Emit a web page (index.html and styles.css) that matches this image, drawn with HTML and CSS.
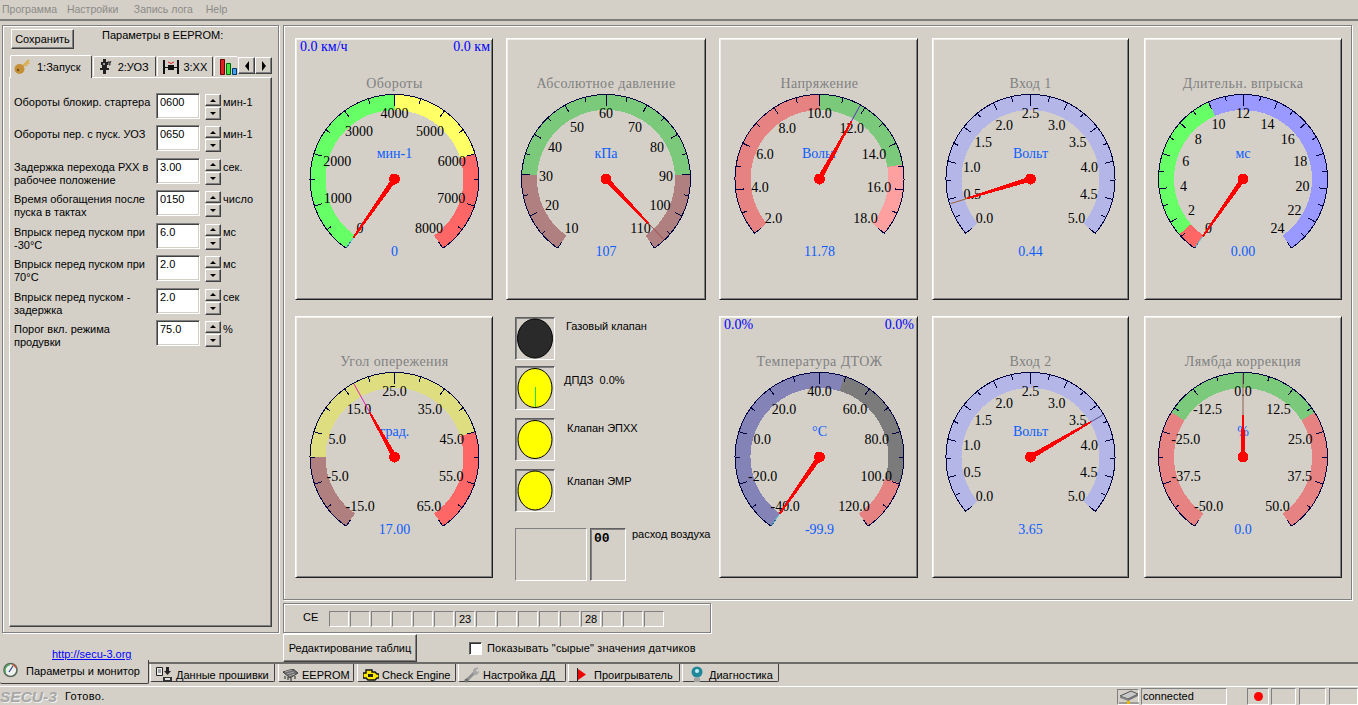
FILE: index.html
```html
<!DOCTYPE html>
<html lang="ru">
  <head>
    <meta charset="UTF-8" />
    <title>SECU-3 Manager</title>
    <link rel="stylesheet" href="styles.css">
  </head>
  <body>
    <div class="app">
      <div class="menu">
        <span class="menu-item m1">Программа</span>
        <span class="menu-item m2">Настройки</span>
        <span class="menu-item m3">Запись лога</span>
        <span class="menu-item">Help</span>
      </div>

      <div class="main">
        <div class="left-col">
          <div class="frame left-frame">
            <div class="save-row">
              <div class="btn save-btn">Сохранить</div>
              <span class="save-title">Параметры в EEPROM:</span>
            </div>
            <div class="sub-tabs">
              <div class="sub-tab sub-tab-active t1">
                <svg class="key-icon" width="16" height="17" viewBox="0 0 16 17"><path d="M9 8 15 2M11 6l2 2M13 4l2 2" stroke="#d8b058" stroke-width="2.4" fill="none"/><circle cx="5.5" cy="11" r="5" fill="#c48f36"/><circle cx="4" cy="12" r="1.3" fill="#7a5420"/></svg>
                <span>1:Запуск</span>
              </div>
              <div class="sub-tab t2">
                <svg width="15" height="16" viewBox="0 0 15 16"><path d="M4 0h3v3H4zM2 3h7v3H2zM3 6h5v5H3zM1 9h9v2H1zM4 11h3v4H4z" fill="#222"/><path d="M4 4h2v2H4z" fill="#999"/><path d="M10 3h1v3h-1zM12 2l-1 2M9 2l1 2" stroke="#333" fill="none"/></svg>
                <span>2:УОЗ</span>
              </div>
              <div class="sub-tab t3">
                <svg width="17" height="15" viewBox="0 0 17 15"><path d="M0 1h2v14H0zM14 1h2v14h-2zM2 8h12v1H2zM5 6h6v5H5z" fill="#111"/><path d="M5 3q3 3 6 0" stroke="#e02020" fill="none"/></svg>
                <span>3:XX</span>
              </div>
              <div class="sub-tab t4">
                <svg width="17" height="16" viewBox="0 0 17 16"><path d="M.5.5h4v15h-4z" fill="#e02020" stroke="#600"/><path d="M6.5 4.5h4v11h-4z" fill="#40e040" stroke="#060"/><path d="M12.5 9.5h4v6h-4z" fill="#40a0f0" stroke="#036"/></svg>
              </div>
              <div class="btn arrow-btn"><i class="tri tri-left"></i></div>
              <div class="btn arrow-btn"><i class="tri tri-right"></i></div>
            </div>
            <div class="sub-panel">
              <div class="param">
                <div class="param-label">Обороты блокир. стартера</div>
                <div class="edit">0600</div>
                <div class="spin"><div class="btn"><i class="tri tri-up"></i></div><div class="btn"><i class="tri tri-down"></i></div></div>
                <div class="param-unit">мин-1</div>
              </div>
              <div class="param">
                <div class="param-label">Обороты пер. с пуск. УОЗ</div>
                <div class="edit">0650</div>
                <div class="spin"><div class="btn"><i class="tri tri-up"></i></div><div class="btn"><i class="tri tri-down"></i></div></div>
                <div class="param-unit">мин-1</div>
              </div>
              <div class="param">
                <div class="param-label">Задержка перехода РХХ в рабочее положение</div>
                <div class="edit">3.00</div>
                <div class="spin"><div class="btn"><i class="tri tri-up"></i></div><div class="btn"><i class="tri tri-down"></i></div></div>
                <div class="param-unit">сек.</div>
              </div>
              <div class="param">
                <div class="param-label">Время обогащения после пуска в тактах</div>
                <div class="edit">0150</div>
                <div class="spin"><div class="btn"><i class="tri tri-up"></i></div><div class="btn"><i class="tri tri-down"></i></div></div>
                <div class="param-unit">число</div>
              </div>
              <div class="param">
                <div class="param-label">Впрыск перед пуском при -30°C</div>
                <div class="edit">6.0</div>
                <div class="spin"><div class="btn"><i class="tri tri-up"></i></div><div class="btn"><i class="tri tri-down"></i></div></div>
                <div class="param-unit">мс</div>
              </div>
              <div class="param">
                <div class="param-label">Впрыск перед пуском при 70°C</div>
                <div class="edit">2.0</div>
                <div class="spin"><div class="btn"><i class="tri tri-up"></i></div><div class="btn"><i class="tri tri-down"></i></div></div>
                <div class="param-unit">мс</div>
              </div>
              <div class="param">
                <div class="param-label">Впрыск перед пуском - задержка</div>
                <div class="edit">2.0</div>
                <div class="spin"><div class="btn"><i class="tri tri-up"></i></div><div class="btn"><i class="tri tri-down"></i></div></div>
                <div class="param-unit">сек</div>
              </div>
              <div class="param">
                <div class="param-label">Порог вкл. режима продувки</div>
                <div class="edit">75.0</div>
                <div class="spin"><div class="btn"><i class="tri tri-up"></i></div><div class="btn"><i class="tri tri-down"></i></div></div>
                <div class="param-unit">%</div>
              </div>
            </div>
          </div>
          <a class="site-link" href="#">http://secu-3.org</a>
        </div>

        <div class="right-col">
          <div class="frame gauges-frame">
            <div class="gauge-grid">
              <div class="gauge" id="g-rpm"></div>
              <div class="gauge gauge-wide" id="g-map"></div>
              <div class="gauge gauge-mid" id="g-volt"></div>
              <div class="gauge gauge-narrow" id="g-in1"></div>
              <div class="gauge" id="g-inj"></div>
              <div class="gauge" id="g-adv"></div>
              <div class="leds">
                <div class="led-row lr1">
                  <div class="led"><svg width="38" height="41" viewBox="0 0 38 41"><ellipse cx="19" cy="20.5" rx="17.5" ry="19.5" fill="#2a2a2a" stroke="#000"/></svg></div>
                  <span class="led-label ll1">Газовый клапан</span>
                </div>
                <div class="led-row lr2">
                  <div class="led led-tall"><svg width="38" height="42" viewBox="0 0 38 42"><ellipse cx="19" cy="21" rx="17" ry="19.5" fill="#ffff00" stroke="#000"/><path d="M19.5 20v20" stroke="#20e040"/></svg></div>
                  <span class="led-label ll2">ДПДЗ&nbsp; 0.0%</span>
                </div>
                <div class="led-row lr3">
                  <div class="led"><svg width="38" height="41" viewBox="0 0 38 41"><ellipse cx="19" cy="20.5" rx="17" ry="19" fill="#ffff00" stroke="#000"/></svg></div>
                  <span class="led-label ll3">Клапан ЭПХХ</span>
                </div>
                <div class="led-row lr4">
                  <div class="led"><svg width="38" height="41" viewBox="0 0 38 41"><ellipse cx="19" cy="20.5" rx="17" ry="19.5" fill="#ffff00" stroke="#000"/></svg></div>
                  <span class="led-label ll4">Клапан ЭМР</span>
                </div>
                <div class="air-row">
                  <div class="air-blank"></div>
                  <div class="air-value">00</div>
                  <span class="air-label">расход воздуха</span>
                </div>
              </div>
              <div class="gauge gauge-mid" id="g-temp"></div>
              <div class="gauge gauge-narrow" id="g-in2"></div>
              <div class="gauge" id="g-lambda"></div>
            </div>
          </div>

          <div class="frame ce-frame">
            <span class="ce-title">CE</span>
            <div class="ce-cells">
              <div class="ce-cell"></div><div class="ce-cell"></div><div class="ce-cell"></div><div class="ce-cell"></div>
              <div class="ce-cell"></div><div class="ce-cell"></div><div class="ce-cell">23</div><div class="ce-cell"></div>
              <div class="ce-cell"></div><div class="ce-cell"></div><div class="ce-cell"></div><div class="ce-cell"></div>
              <div class="ce-cell">28</div><div class="ce-cell"></div><div class="ce-cell"></div><div class="ce-cell"></div>
            </div>
          </div>

          <div class="tools">
            <div class="btn tables-btn">Редактирование таблиц</div>
            <div class="check"></div>
            <span class="check-label">Показывать "сырые" значения датчиков</span>
          </div>
        </div>
      </div>

      <div class="page-tabs">
        <div class="page-tab page-tab-active">
          <svg class="gauge-icon" width="16" height="16" viewBox="0 0 16 16"><circle cx="8.500" cy="8" r="6.500" fill="#eef2ee" stroke="#586858" stroke-width="1.600"/><path d="M3.500 11A6 6 0 0 1 8 2.500" stroke="#58a868" stroke-width="1.500" fill="none"/><path d="M10 2.500A6 6 0 0 1 14 6" stroke="#d06040" stroke-width="1.500" fill="none"/><path d="M7 10l4-6" stroke="#304080" stroke-width="1.200"/></svg>
          <span>Параметры и монитор</span>
        </div>
        <div class="page-tab">
          <svg width="17" height="16" viewBox="0 0 17 16"><path d="M.5.5h6v8h-6z" fill="#eee" stroke="#222"/><path d="M2 3h3M2 5h3" stroke="#555"/><path d="M10 0h3v4h2l-3.500 4L8 4h2z" fill="#222"/><path d="M7 10h9v5H7z" fill="#333"/><path d="M9 11h5v2H9z" fill="#ddd"/></svg>
          <span>Данные прошивки</span>
        </div>
        <div class="page-tab">
          <svg width="16" height="12" viewBox="0 0 16 12"><path d="M0 3 10 0l5 4-8 5z" fill="#6c6c6c" stroke="#3c3c3c"/><path d="M2 3l7-2M4 5l7-2M6 7l6-2" stroke="#a8a8a8"/><path d="M2 7v3M5 8v3M8 9v3M12 7v3" stroke="#484848" stroke-width="1.300"/></svg>
          <span>EEPROM</span>
        </div>
        <div class="page-tab">
          <svg width="16" height="12" viewBox="0 0 16 12"><path d="M3 1h6v2h3l2 2h2v4h-2l-2 2H5L3 9H0V4h3z" fill="#ffe800" stroke="#111" stroke-width="1.400"/><path d="M5 5h5v3H5z" fill="#222"/></svg>
          <span>Check Engine</span>
        </div>
        <div class="page-tab">
          <svg width="16" height="16" viewBox="0 0 16 16"><path d="M2 14 11 5" stroke="#909090" stroke-width="3"/><path d="M9 5a4 4 0 0 1 6-4l-3 2 1 2 2-1a4 4 0 0 1-5 4z" fill="#a8a8a8"/><circle cx="2.500" cy="13.500" r="2" fill="#707070"/></svg>
          <span>Настройка ДД</span>
        </div>
        <div class="page-tab">
          <svg width="10" height="13" viewBox="0 0 10 13"><path d="M.5 0v13" stroke="#222"/><path d="M1 1l8 5.500L1 12z" fill="#f00000"/></svg>
          <span>Проигрыватель</span>
        </div>
        <div class="page-tab">
          <svg width="12" height="17" viewBox="0 0 12 17"><circle cx="6" cy="6" r="5.500" fill="#208898"/><circle cx="6" cy="5" r="2" fill="#c0f0f8"/><path d="M3 12h6v4H3z" fill="#808080"/><path d="M3 13h6M3 15h6" stroke="#c8c8c8"/></svg>
          <span>Диагностика</span>
        </div>
      </div>

      <div class="status">
        <span class="secu-logo">SECU-3</span>
        <span class="status-text">Готово.</span>
        <div class="net-icon"><svg width="20" height="15" viewBox="0 0 20 15"><path d="M1 6 12 1l7 3-10 5z" fill="#c8c8c8" stroke="#555"/><path d="M1 6l8 3v2L1 8z" fill="#888"/><path d="M9 9l10-5v2L9 11z" fill="#777"/><path d="M0 13h20" stroke="#666"/><path d="M8 11h3v3H8z" fill="#e8b800"/></svg></div>
        <div class="status-cell status-conn">connected</div>
        <div class="status-cell status-led"><i class="red-dot"></i></div>
        <div class="status-cell status-s1"></div>
        <div class="status-cell status-s2"></div>
        <div class="status-cell status-s3"></div>
      </div>
    </div>

    <script src="script.js"></script>
  </body>
</html>
```

FILE: styles.css
```css
* {
  box-sizing: border-box;
}
body {
  margin: 0;
  background-color: #d4d0c8;
  font-family: "Liberation Sans", Arial, sans-serif;
  font-size: 11px;
  color: #000;
}
.app {
  width: 1358px;
  height: 705px;
  overflow: hidden;
  display: flex;
  flex-direction: column;
}

/* menu */
.menu {
  height: 21px;
  flex: none;
  padding: 3px 0 0 2px;
  border-bottom: 2px solid #807e7a;
  color: #8c8a86;
  font-size: 10.5px;
  white-space: nowrap;
}
.menu-item {
  display: inline-block;
}
.m1 { width: 62px; }
.m2 { width: 64px; }
.m3 { width: 69px; }

/* common */
.frame {
  border: 1px solid #808080;
  box-shadow: 1px 1px 0 #fff, inset 1px 1px 0 #fff;
}
.btn {
  background-color: #d4d0c8;
  border: 1px solid;
  border-color: #fff #404040 #404040 #fff;
  box-shadow: inset -1px -1px 0 #808080;
  display: flex;
  align-items: center;
  justify-content: center;
}
.tri {
  display: block;
  width: 0;
  height: 0;
  border: 3px solid transparent;
}
.tri-up { border-bottom-color: #000; border-top-width: 0; }
.tri-down { border-top-color: #000; border-bottom-width: 0; }
.tri-left { border-right-color: #000; border-left-width: 0; border-width: 5px 4px 5px 0; }
.tri-right { border-left-color: #000; border-width: 5px 0 5px 4px; }

.main {
  display: flex;
  height: 641px;
  flex: none;
  padding: 4px 0 0 2px;
}
.left-col {
  width: 281px;
  flex: none;
}
.left-frame {
  width: 277px;
  height: 608px;
  padding: 3px 0 0 6px;
}
.save-row {
  display: flex;
  height: 26px;
}
.save-btn {
  width: 63px;
  height: 20px;
  margin-left: 2px;
}
.save-title {
  margin: 0 0 0 28px;
}
.sub-tabs {
  display: flex;
  align-items: flex-end;
  height: 22px;
  width: 263px;
  position: relative;
  z-index: 1;
}
.sub-tab {
  height: 20px;
  margin-bottom: 1px;
  background-color: #d4d0c8;
  border-top: 1px solid #fff;
  border-left: 1px solid #fff;
  border-right: 1px solid #404040;
  border-radius: 2px 2px 0 0;
  display: flex;
  align-items: center;
  margin-right: 1px;
  overflow: hidden;
}
.sub-tab-active {
  height: 23px;
  margin-bottom: -1px;
}
.t1 { width: 82px; margin-left: 1px; padding-left: 3px; gap: 7px; }
.t2 { width: 64px; padding-left: 5px; gap: 4px; }
.t3 { width: 56px; padding-left: 5px; gap: 3px; }
.t4 { width: 24px; padding-left: 5px; border-right: 0; margin-right: 0; }
.key-icon { margin-top: -2px; }
.arrow-btn {
  width: 17px;
  height: 17px;
  margin-bottom: 3px;
}
.sub-panel {
  width: 263px;
  height: 550px;
  border: 1px solid;
  border-color: #fff #404040 #404040 #fff;
  box-shadow: inset -1px -1px 0 #808080;
  padding: 15px 0 0 4px;
  display: grid;
  grid-auto-rows: 32.43px;
  align-content: start;
}
.param {
  display: grid;
  grid-template-columns: 142px 44px 16px auto;
  line-height: 13px;
}
.param-label {
  padding-top: 3px;
}
.edit {
  height: 26px;
  background-color: #fff;
  border: 1px solid;
  border-color: #808080 #fff #fff #808080;
  box-shadow: inset 1px 1px 0 #404040, inset -1px -1px 0 #d4d0c8;
  padding: 2px 0 0 3px;
}
.spin {
  margin-left: 5px;
  width: 16px;
  margin-top: 1px;
  display: grid;
  grid-template-rows: 12px 13px;
  gap: 1px;
}
.spin .btn {
  height: 100%;
}
.param-unit {
  padding: 3px 0 0 7px;
}
.site-link {
  display: block;
  margin: 15px 0 0 50px;
  color: #0000ff;
  line-height: 13px;
}

/* gauges */
.right-col {
  width: 1071px;
  flex: none;
}
.gauges-frame {
  width: 1069px;
  height: 575px;
  padding: 12px 0 0 11px;
}
.gauge-grid {
  display: grid;
  grid-template-columns: 211px 213px 213px 212px 199px;
  grid-template-rows: 262px 262px;
  row-gap: 16px;
}
.gauge {
  width: 198px;
  height: 262px;
  border: 1px solid;
  border-color: #fff #202020 #202020 #fff;
  box-shadow: inset 1px 1px 0 #f0eee8, inset -1px -1px 0 #808080;
}
.gauge-wide { width: 200px; }
.gauge-mid { width: 199px; }
.gauge-narrow { width: 197px; }
.gauge svg {
  display: block;
  margin: -1px;
}
.g-band, .g-needle, .g-tick {
  shape-rendering: crispEdges;
}
.g-tick {
  stroke: #000040;
  fill: none;
}
.g-label {
  font-family: "Liberation Serif", serif;
  font-size: 14px;
  text-anchor: middle;
  fill: #000;
}
.g-title {
  font-family: "Liberation Serif", serif;
  font-size: 14px;
  text-anchor: middle;
  fill: #808080;
  letter-spacing: 0.4px;
}
.g-unit {
  font-family: "Liberation Serif", serif;
  font-size: 14px;
  text-anchor: middle;
  fill: #0c5cff;
}
.g-corner {
  font-family: "Liberation Serif", serif;
  font-size: 14px;
  fill: #0000ff;
}
.g-end {
  text-anchor: end;
}

/* leds */
.leds {
  padding: 1px 0 0 9px;
  display: flex;
  flex-direction: column;
}
.led-row {
  display: flex;
  align-items: flex-start;
}
.lr1 { margin-bottom: 6px; }
.lr2 { margin-bottom: 8px; }
.lr3 { margin-bottom: 8px; }
.lr4 { margin-bottom: 16px; }
.led {
  width: 40px;
  height: 43px;
  flex: none;
  border: 1px solid;
  border-color: #606060 #fff #fff #606060;
  box-shadow: inset 1px 1px 0 #808080;
  display: flex;
  align-items: center;
  justify-content: center;
}
.led-tall {
  height: 44px;
}
.led-label {
  white-space: nowrap;
}
.ll1 { margin: 3px 0 0 11px; }
.ll2 { margin: 8px 0 0 9px; }
.ll3 { margin: 4px 0 0 12px; }
.ll4 { margin: 6px 0 0 12px; }
.air-row {
  display: flex;
}
.air-blank {
  width: 72px;
  height: 53px;
  border: 1px solid;
  border-color: #808080 #fff #fff #808080;
}
.air-value {
  width: 36px;
  height: 53px;
  margin-left: 3px;
  border: 1px solid;
  border-color: #606060 #fff #fff #606060;
  box-shadow: inset 1px 1px 0 #808080;
  padding: 2px 0 0 3px;
  font-family: "Liberation Mono", monospace;
  font-weight: bold;
  font-size: 13px;
}
.air-label {
  margin-left: 6px;
  white-space: nowrap;
}

/* CE errors */
.ce-frame {
  width: 428px;
  height: 30px;
  margin-top: 3px;
  display: flex;
  align-items: flex-start;
  padding-top: 7px;
}
.ce-title {
  margin-left: 19px;
  width: 26px;
}
.ce-cells {
  display: flex;
  gap: 1px;
}
.ce-cell {
  width: 20px;
  height: 16px;
  border: 1px solid;
  border-color: #808080 #fff #fff #808080;
  text-align: center;
  line-height: 14px;
}
.tools {
  display: flex;
  align-items: center;
  margin-top: 1px;
}
.tables-btn {
  width: 134px;
  height: 28px;
  margin-right: 52px;
}
.check {
  width: 13px;
  height: 13px;
  background-color: #fff;
  border: 1px solid;
  border-color: #606060 #fff #fff #606060;
  box-shadow: inset 1px 1px 0 #303030;
  margin-right: 5px;
}
.check-label {
  letter-spacing: 0.13px;
}

/* bottom tabs */
.page-tabs {
  height: 25px;
  flex: none;
  display: grid;
  grid-template-columns: 150px 128px 79px 101px 110px 114px 99px;
  justify-content: start;
  border-top: 2px solid #6e6c68;
  border-bottom: 1px solid #fff;
}
.page-tab {
  height: 18px;
  display: flex;
  align-items: center;
  gap: 3px;
  padding-left: 5px;
  margin-right: 2px;
  border-left: 1px solid #fff;
  border-right: 1px solid #404040;
  border-bottom: 1px solid #404040;
  border-radius: 0 0 2px 2px;
  padding-top: 4px;
}
.page-tab:nth-child(2) { margin-right: 3px; }
.page-tab:nth-child(3) { margin-right: 3px; padding-left: 4px; }
.page-tab:nth-child(5) { gap: 3px; }
.page-tab:nth-child(6) { padding-left: 8px; gap: 7px; }
.page-tab:nth-child(7) { padding-left: 8px; gap: 6px; }
.page-tab-active {
  height: 24px;
  margin-top: -4px;
  margin-right: 1px;
  padding-left: 2px;
  border-left: 0;
  background-color: #d4d0c8;
  gap: 8px;
  padding-top: 2px;
  align-items: flex-start;
}
.page-tab-active span {
  margin-top: 3px;
}
.gauge-icon {
  flex: none;
}

/* status bar */
.status {
  flex: 1;
  display: flex;
  align-items: flex-end;
  white-space: nowrap;
}
.secu-logo {
  width: 65px;
  height: 18px;
  flex: none;
  font-size: 15.5px;
  font-weight: bold;
  font-style: italic;
  color: #a8a8a8;
  text-shadow: 1px 1px 0 #f0f0f0;
  line-height: 19px;
}
.status-text {
  width: 1052px;
  flex: none;
  height: 18px;
  line-height: 18px;
  letter-spacing: 0.4px;
}
.net-icon {
  width: 22px;
  height: 16px;
  margin-right: 2px;
  flex: none;
  border: 1px solid;
  border-color: #808080 #fff #fff #808080;
  padding-left: 1px;
}
.status-cell {
  height: 17px;
  flex: none;
  border: 1px solid;
  border-color: #808080 #fff #fff #808080;
  line-height: 15px;
}
.status-conn { width: 86px; padding-left: 1px; margin-right: 20px; }
.status-led { width: 22px; margin-right: 2px; display: flex; align-items: center; justify-content: center; }
.status-s1 { width: 25px; margin-right: 3px; }
.status-s2 { width: 27px; margin-right: 3px; }
.status-s3 { width: 29px; }
.red-dot {
  width: 9px;
  height: 9px;
  border-radius: 50%;
  background-color: #ff0000;
}
```

FILE: script.js
```js
const GREEN = '#66ff66', YELLOW = '#ffff66', RED = '#ff6666', BLUE = '#9999ff';
const SOFT_GREEN = '#7bc97b', BROWN = '#b08080', SOFT_RED = '#e68282', PINK = '#ffa0a0';
const PALE_BLUE = '#b3b6e6', OLIVE = '#dede80', SLATE = '#8383b8', GRAY = '#7b7b7b';

// sweep - half of the dial angle, bands - [to angle, colour]
const gauges = [
  { id: 'g-rpm', title: 'Обороты', unit: 'мин-1', text: '0', value: 0, min: 0, step: 1000, digits: 0, count: 9, sweep: 145,
    bands: [[0, GREEN], [72.5, YELLOW], [145, RED]], thin: '#50c8e0', thinFrom: 72, cx: 99.5, left: '0.0 км/ч', right: '0.0 км' },
  { id: 'g-map', title: 'Абсолютное давление', unit: 'кПа', text: '107', value: 107, min: 10, step: 10, digits: 0, count: 11, sweep: 145,
    bands: [[-87, BROWN], [87, SOFT_GREEN], [145, BROWN]], thin: '#a04848', thinFrom: 61, cx: 100 },
  { id: 'g-volt', title: 'Напряжение', unit: 'Вольт', text: '11.78', value: 11.78, min: 2, step: 2, digits: 1, count: 9, sweep: 130,
    bands: [[0, SOFT_RED], [80, SOFT_GREEN], [130, PINK]], thin: '#6030c0', thinFrom: 66, cx: 100.5 },
  { id: 'g-in1', title: 'Вход 1', unit: 'Вольт', text: '0.44', value: 0.44, min: 0, step: 0.5, digits: 1, count: 11, sweep: 130,
    bands: [[130, PALE_BLUE]], thin: '#a06030', thinFrom: 66, cx: 98.5 },
  { id: 'g-inj', title: 'Длительн. впрыска', unit: 'мс', text: '0.00', value: 0, min: 0, step: 2, digits: 0, count: 13, sweep: 145,
    bands: [[-131, RED], [-24, GREEN], [145, BLUE]], thin: '#50c8e0', thinFrom: 70, cx: 99 },
  { id: 'g-adv', title: 'Угол опережения', unit: 'град.', text: '17.00', value: 17, min: -15, step: 10, digits: 1, count: 9, sweep: 145,
    bands: [[-90, BROWN], [72.5, OLIVE], [145, RED]], thin: '#e020c0', thinFrom: 51, cx: 99.5 },
  { id: 'g-temp', title: 'Температура ДТОЖ', unit: '°C', text: '-99.9', value: -40, min: -40, step: 20, digits: 1, count: 9, sweep: 145,
    bands: [[17, SLATE], [108, GRAY], [145, SOFT_RED]], thin: '#50c8e0', thinFrom: 70, cx: 100.5, left: '0.0%', right: '0.0%' },
  { id: 'g-in2', title: 'Вход 2', unit: 'Вольт', text: '3.65', value: 3.65, min: 0, step: 0.5, digits: 1, count: 11, sweep: 130,
    bands: [[130, PALE_BLUE]], thin: '#505080', thinFrom: 70, cx: 98.5 },
  { id: 'g-lambda', title: 'Лямбда коррекция', unit: '%', text: '0.0', value: 0, min: -50, step: 12.5, digits: 1, count: 9, sweep: 145,
    bands: [[-58, SOFT_RED], [58, SOFT_GREEN], [145, SOFT_RED]], thin: '#906050', thinFrom: 42, cx: 99 }
];

const CY = 141;
const OUTER = 84.5;
const INNER = 69;

function point(cx, angle, r) {
  let rad = angle * Math.PI / 180;
  return [(cx + r * Math.sin(rad)).toFixed(2), (CY - r * Math.cos(rad)).toFixed(2)];
}

function bandPath(cx, a0, a1) {
  let big = a1 - a0 > 180 ? 1 : 0;
  let p0 = point(cx, a0, OUTER), p1 = point(cx, a1, OUTER);
  let p2 = point(cx, a1, INNER), p3 = point(cx, a0, INNER);
  return `M${p0} A${OUTER} ${OUTER} 0 ${big} 1 ${p1} L${p2} A${INNER} ${INNER} 0 ${big} 0 ${p3}Z`;
}

function needle(g, angle) {
  // tapered red part and the thin end over the band
  let a = point(g.cx, angle - 90, 2.6), b = point(g.cx, angle + 90, 2.6);
  let c = point(g.cx, angle, g.thinFrom);
  let end = point(g.cx, angle, OUTER - 1);
  let side = 0.9;
  let c1 = [+c[0] + side * Math.cos(angle * Math.PI / 180), +c[1] + side * Math.sin(angle * Math.PI / 180)];
  let c2 = [+c[0] - side * Math.cos(angle * Math.PI / 180), +c[1] - side * Math.sin(angle * Math.PI / 180)];
  return `<line x1="${c[0]}" y1="${c[1]}" x2="${end[0]}" y2="${end[1]}" stroke="${g.thin}"/>` +
    `<polygon class="g-needle" points="${a} ${b} ${c1} ${c2}" fill="#ff0000"/>` +
    `<circle class="g-needle" cx="${g.cx}" cy="${CY}" r="5.5" fill="#ff0000"/>`;
}

function drawGauge(g) {
  let html = '';
  let from = -g.sweep;
  g.bands.forEach(band => {
    html += `<path class="g-band" d="${bandPath(g.cx, from, band[0])}" fill="${band[1]}"/>`;
    from = band[0];
  });

  let stepAngle = 2 * g.sweep / (g.count - 1);
  let ticks = '';
  let labels = '';
  for (let i = 0; i < g.count * 2 - 1; i++) {
    let angle = -g.sweep + i * stepAngle / 2;
    let major = i % 2 === 0;
    let top = Math.abs(angle) < 0.01;
    let p0 = point(g.cx, angle, OUTER);
    let p1 = point(g.cx, angle, OUTER - (top ? 11 : major ? 8 : 5));
    ticks += `M${p0}L${p1}`;
    if (major) {
      let pos = point(g.cx, angle, 60);
      let y = +pos[1] + 5 - (top ? 6.5 : 0);
      let text = (g.min + (i / 2) * g.step).toFixed(g.digits);
      labels += `<text class="g-label" x="${pos[0]}" y="${y}">${text}</text>`;
    }
  }
  let s = point(g.cx, -g.sweep, OUTER), e = point(g.cx, g.sweep, OUTER);
  ticks += `M${s}A${OUTER} ${OUTER} 0 1 1 ${e}`;
  html += `<path class="g-tick" d="${ticks}"/>` + labels;

  html += `<text class="g-title" x="${g.cx}" y="50">${g.title}</text>`;
  html += `<text class="g-unit" x="${g.cx}" y="120">${g.unit}</text>`;
  html += `<text class="g-unit" x="${g.cx}" y="218">${g.text}</text>`;
  if (g.left) {
    html += `<text class="g-corner" x="5" y="13">${g.left}</text>`;
    html += `<text class="g-corner g-end" x="195" y="13">${g.right}</text>`;
  }

  let range = g.step * (g.count - 1);
  let angle = (g.value - g.min) / range * 2 * g.sweep - g.sweep;
  html += needle(g, angle);

  document.getElementById(g.id).innerHTML =
    `<svg width="199" height="262" viewBox="0 0 199 262">${html}</svg>`;
}

gauges.forEach(drawGauge);
```
